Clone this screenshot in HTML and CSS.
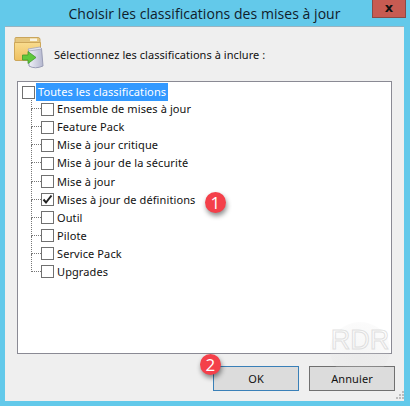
FILE: index.html
```html
<!DOCTYPE html>
<html lang="fr">
<head>
    <meta charset="UTF-8">
    <title>Choisir les classifications des mises à jour</title>
    <link rel="stylesheet" href="styles.css">
</head>
<body>
    <div class="window">
        <div class="titlebar">
            <span></span>
            <span class="title">Choisir les classifications des mises à jour</span>
            <span class="close">x</span>
        </div>
        <div class="client">
            <div class="header">
                <svg class="header-icon" width="32" height="34" viewBox="0 0 32 34">
                    <defs>
                        <linearGradient id="folderFill" x1="0" y1="0" x2="0" y2="1">
                            <stop offset="0" stop-color="#f9dc8e"/>
                            <stop offset="1" stop-color="#eebf5f"/>
                        </linearGradient>
                        <linearGradient id="boxFill" x1="0" y1="0" x2="1" y2="0">
                            <stop offset="0" stop-color="#f1f2f8"/>
                            <stop offset="1" stop-color="#b4b7cf"/>
                        </linearGradient>
                    </defs>
                    <path d="M2 6 L2 3.5 Q2 2.5 3 2.5 L25 2.5 Q27 2.5 27 4.5 L27 8 L2 8 Z" fill="#e6c77e" stroke="#c9a55c"/>
                    <rect x="17" y="3.5" width="7" height="2.5" fill="#f8f3e2"/>
                    <path d="M1.5 7.5 L27.5 7.5 L27.5 23 Q27.5 25.5 25 25.5 L3 25.5 Q1.5 25.5 1.5 24 Z" fill="url(#folderFill)" stroke="#cda75a"/>
                    <path d="M15.5 15 L28.5 13.5 L30 31 Q22 34.5 16 31 Z" fill="url(#boxFill)" stroke="#9a9db5"/>
                    <path d="M15 14 L27 12 L29 14 L16 16 Z" fill="#e4e6f0" stroke="#a3a6bc" stroke-width="0.8"/>
                    <path d="M9.5 20 L15 20 L15 16.5 L23 22.5 L15 28.5 L15 25 L9.5 25 Z" fill="#5fc83c" stroke="#3f9a28" stroke-width="0.8"/>
                </svg>
                <span class="prompt">Sélectionnez les classifications à inclure :</span>
            </div>

            <div class="tree">
                <div class="row root">
                    <span class="check"></span>
                    <span class="label selected">Toutes les classifications</span>
                </div>
                <ul class="children">
                    <li class="row"><span class="check"></span><span class="label">Ensemble de mises à jour</span></li>
                    <li class="row"><span class="check"></span><span class="label">Feature Pack</span></li>
                    <li class="row"><span class="check"></span><span class="label">Mise à jour critique</span></li>
                    <li class="row"><span class="check"></span><span class="label">Mise à jour de la sécurité</span></li>
                    <li class="row"><span class="check"></span><span class="label">Mise à jour</span></li>
                    <li class="row">
                        <span class="check">
                            <svg width="11" height="11" viewBox="0 0 11 11"><path d="M1.5 5.5 L4 8.5 L9.5 1.5" fill="none" stroke="#222" stroke-width="2"/></svg>
                        </span>
                        <span class="label">Mises à jour de définitions</span>
                    </li>
                    <li class="row"><span class="check"></span><span class="label">Outil</span></li>
                    <li class="row"><span class="check"></span><span class="label">Pilote</span></li>
                    <li class="row"><span class="check"></span><span class="label">Service Pack</span></li>
                    <li class="row"><span class="check"></span><span class="label">Upgrades</span></li>
                </ul>
            </div>

            <div class="actions">
                <button class="btn btn-default">OK</button>
                <button class="btn">Annuler</button>
            </div>
        </div>

        <!-- Overlays -->
        <span class="badge badge-one">1</span>
        <span class="badge badge-two">2</span>
        <div class="watermark">RDR</div>
        <svg class="grip" width="9" height="9" viewBox="0 0 9 9">
            <path d="M7 1h2v2H7zM4 4h2v2H4zM7 4h2v2H7zM1 7h2v2H1zM4 7h2v2H4zM7 7h2v2H7z" fill="#bcbcbc"/>
        </svg>
    </div>
</body>
</html>
```

FILE: styles.css
```css
body {
    margin: 0;
    font-family: "Noto Sans", Arial, sans-serif;
    font-size: 11px;
    letter-spacing: 0.1px;
    color: #111;
}
.window {
    position: relative;
    width: 410px;
    height: 406px;
    box-sizing: border-box;
    padding: 0 6px 6px 5px;
    background: #63c9ea;
    display: flex;
    flex-direction: column;
    overflow: hidden;
}
.titlebar {
    height: 26px;
    flex: none;
    display: grid;
    grid-template-columns: 1fr auto 1fr;
    align-items: center;
}
.title {
    font-family: "Open Sans", sans-serif;
    font-size: 14px;
    letter-spacing: 0.05px;
    color: #10202a;
    white-space: nowrap;
}
.close {
    justify-self: end;
    align-self: start;
    margin-right: -2px;
    width: 34px;
    height: 18px;
    box-sizing: border-box;
    background: #c75b52;
    border: 1px solid #8a4a46;
    border-top: none;
    color: #111;
    font-family: "DejaVu Sans", sans-serif;
    font-weight: bold;
    font-size: 13px;
    line-height: 15px;
    text-align: center;
}
.client {
    flex: 1;
    box-sizing: border-box;
    background: #efefef;
    border-top: 1px solid #97b4c2;
    padding: 0 12px 10px 12px;
    display: flex;
    flex-direction: column;
}
.header {
    height: 54px;
    flex: none;
    display: flex;
    align-items: center;
    gap: 9px;
    margin-left: -4px;
}
.header-icon {
    flex: none;
    margin-top: -4px;
}
.prompt {
    letter-spacing: 0.05px;
}
.tree {
    width: 375px;
    height: 273px;
    box-sizing: border-box;
    border: 1px solid #8a8a94;
    background: #fff;
    padding: 0 0 0 4px;
}
.children {
    list-style: none;
    margin: -1px 0 0 0;
    padding: 0;
}
.row {
    height: 18.1px;
    display: flex;
    align-items: center;
    position: relative;
}
.root {
    margin-top: 1px;
    z-index: 1;
}
.children .row {
    padding-left: 19px;
}
/* dotted connectors of the tree */
.children .row::before {
    content: "";
    position: absolute;
    left: 9px;
    top: -9px;
    bottom: 9px;
    width: 9px;
    border-left: 1px dotted #777;
    border-bottom: 1px dotted #777;
}
.check {
    flex: none;
    width: 13px;
    height: 13px;
    box-sizing: border-box;
    border: 1px solid #707070;
    background: #fff;
    display: flex;
    align-items: center;
    justify-content: center;
    position: relative;
}
.label {
    margin-left: 1px;
    padding: 0 2px;
    line-height: 18px;
    white-space: nowrap;
}
.selected {
    background: #3399ff;
    color: #fff;
}
.actions {
    display: flex;
    justify-content: flex-end;
    gap: 10px;
    margin-top: 12px;
    margin-right: -3px;
}
.btn {
    width: 86px;
    height: 25px;
    padding: 0;
    border: 1px solid #707070;
    background: #dcdcdc;
    font-family: "Noto Sans", Arial, sans-serif;
    font-size: 11px;
    letter-spacing: 0.1px;
    color: #111;
}
.btn-default {
    border-color: #3a80b8;
}
.badge {
    position: absolute;
    width: 21px;
    height: 21px;
    border-radius: 50%;
    background: #f4404a;
    color: #fff;
    font-family: "Open Sans", sans-serif;
    font-size: 17px;
    line-height: 21px;
    text-align: center;
    box-shadow: 1px 3px 5px rgba(0, 0, 0, 0.45);
}
.badge-one {
    left: 205px;
    top: 192px;
}
.badge-two {
    left: 200px;
    top: 354px;
}
.watermark {
    position: absolute;
    left: 330px;
    top: 322px;
    width: 60px;
    height: 56px;
    border-radius: 50%;
    background: radial-gradient(circle at 50% 60%, rgba(225, 225, 225, 0.3), rgba(225, 225, 225, 0.15) 70%, rgba(225, 225, 225, 0) 100%);
    color: transparent;
    -webkit-text-stroke: 1px rgba(205, 205, 205, 0.6);
    font-family: "Liberation Sans", sans-serif;
    font-size: 27px;
    line-height: 36px;
    text-align: center;
    letter-spacing: 0;
    pointer-events: none;
}
.grip {
    position: absolute;
    right: 6px;
    bottom: 7px;
}
```
